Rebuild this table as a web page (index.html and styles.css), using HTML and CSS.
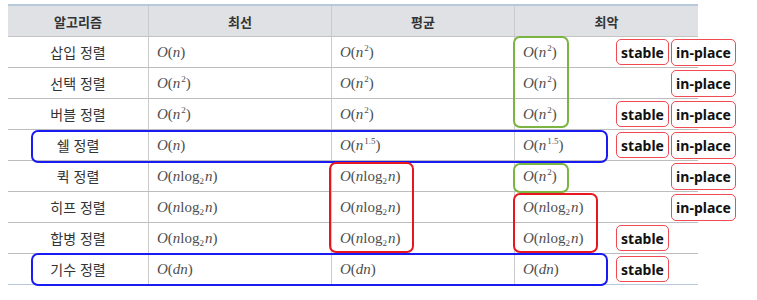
FILE: index.html
```html
<!DOCTYPE html>
<html lang="ko">
<head>
<meta charset="utf-8">
<link rel="stylesheet" href="styles.css">
</head>
<body>
<div class="page">
  <div class="table">
    <div class="row head">
      <div class="cell name">알고리즘</div>
      <div class="cell hc">최선</div>
      <div class="cell hc">평균</div>
      <div class="cell hc">최악</div>
    </div>
    <div class="row">
      <div class="cell name">삽입 정렬</div>
      <div class="cell m"><span class="math"><i>O</i>(<i>n</i>)</span></div>
      <div class="cell m"><span class="math"><i>O</i>(<i>n</i><sup>2</sup>)</span></div>
      <div class="cell m"><span class="math"><i>O</i>(<i>n</i><sup>2</sup>)</span></div>
      <div class="tags"><span class="tag stable">stable</span><span class="tag inplace">in-place</span></div>
    </div>
    <div class="row">
      <div class="cell name">선택 정렬</div>
      <div class="cell m"><span class="math"><i>O</i>(<i>n</i><sup>2</sup>)</span></div>
      <div class="cell m"><span class="math"><i>O</i>(<i>n</i><sup>2</sup>)</span></div>
      <div class="cell m"><span class="math"><i>O</i>(<i>n</i><sup>2</sup>)</span></div>
      <div class="tags"><span class="tag inplace">in-place</span></div>
    </div>
    <div class="row">
      <div class="cell name">버블 정렬</div>
      <div class="cell m"><span class="math"><i>O</i>(<i>n</i><sup>2</sup>)</span></div>
      <div class="cell m"><span class="math"><i>O</i>(<i>n</i><sup>2</sup>)</span></div>
      <div class="cell m"><span class="math"><i>O</i>(<i>n</i><sup>2</sup>)</span></div>
      <div class="tags"><span class="tag stable">stable</span><span class="tag inplace">in-place</span></div>
    </div>
    <div class="row">
      <div class="cell name">쉘 정렬</div>
      <div class="cell m"><span class="math"><i>O</i>(<i>n</i>)</span></div>
      <div class="cell m"><span class="math"><i>O</i>(<i>n</i><sup>1.5</sup>)</span></div>
      <div class="cell m"><span class="math"><i>O</i>(<i>n</i><sup>1.5</sup>)</span></div>
      <div class="tags"><span class="tag stable">stable</span><span class="tag inplace">in-place</span></div>
    </div>
    <div class="row">
      <div class="cell name">퀵 정렬</div>
      <div class="cell m"><span class="math"><i>O</i>(<i>n</i>log<sub>2</sub><i>n</i>)</span></div>
      <div class="cell m"><span class="math"><i>O</i>(<i>n</i>log<sub>2</sub><i>n</i>)</span></div>
      <div class="cell m"><span class="math"><i>O</i>(<i>n</i><sup>2</sup>)</span></div>
      <div class="tags"><span class="tag inplace">in-place</span></div>
    </div>
    <div class="row">
      <div class="cell name">히프 정렬</div>
      <div class="cell m"><span class="math"><i>O</i>(<i>n</i>log<sub>2</sub><i>n</i>)</span></div>
      <div class="cell m"><span class="math"><i>O</i>(<i>n</i>log<sub>2</sub><i>n</i>)</span></div>
      <div class="cell m"><span class="math"><i>O</i>(<i>n</i>log<sub>2</sub><i>n</i>)</span></div>
      <div class="tags"><span class="tag inplace">in-place</span></div>
    </div>
    <div class="row">
      <div class="cell name">합병 정렬</div>
      <div class="cell m"><span class="math"><i>O</i>(<i>n</i>log<sub>2</sub><i>n</i>)</span></div>
      <div class="cell m"><span class="math"><i>O</i>(<i>n</i>log<sub>2</sub><i>n</i>)</span></div>
      <div class="cell m"><span class="math"><i>O</i>(<i>n</i>log<sub>2</sub><i>n</i>)</span></div>
      <div class="tags"><span class="tag stable">stable</span></div>
    </div>
    <div class="row last">
      <div class="cell name">기수 정렬</div>
      <div class="cell m"><span class="math"><i>O</i>(<i>dn</i>)</span></div>
      <div class="cell m"><span class="math"><i>O</i>(<i>dn</i>)</span></div>
      <div class="cell m"><span class="math"><i>O</i>(<i>dn</i>)</span></div>
      <div class="tags"><span class="tag stable">stable</span></div>
    </div>
  </div>

  <div class="hl green g1"></div>
  <div class="hl green g2"></div>
  <div class="hl blue b1"></div>
  <div class="hl blue b2"></div>
  <div class="hl red r1"></div>
  <div class="hl red r2"></div>
</div>
</body>
</html>
```
FILE: styles.css
```css
html, body {
  margin: 0;
  padding: 0;
  background: #ffffff;
}

.page {
  position: relative;
  width: 757px;
  height: 300px;
  padding: 4px 0 0 8px;
  box-sizing: border-box;
}

.table {
  width: 690px;
  border-top: 2px solid #b8c9dc;
  font-family: "Noto Sans CJK KR", "Noto Sans", sans-serif;
  color: #333333;
}

.row {
  position: relative;
  display: grid;
  grid-template-columns: 140px 183px 183px 184px;
  height: 31px;
  box-sizing: border-box;
  border-bottom: 1px solid #bdbdbd;
}

.row.head {
  background: #e0e1e4;
  height: 31px;
  border-bottom: 1px solid #c4c4c4;
}

.row.last {
  border-bottom: 1px solid #b8c9dc;
}

.cell {
  display: flex;
  align-items: center;
  box-sizing: border-box;
}

.cell + .cell {
  border-left: 1px solid #cacaca;
}

.name {
  justify-content: center;
  font-size: 14px;
}

.hc {
  justify-content: center;
  font-size: 13px;
  font-weight: bold;
}

.head .name {
  font-size: 13px;
  font-weight: bold;
}

.m {
  padding-left: 8px;
  font-family: "Liberation Serif", "Times New Roman", serif;
  font-size: 15px;
  color: #4d4d4d;
}

.math {
  white-space: nowrap;
}

.math i {
  font-style: italic;
}

.math sup {
  font-size: 9px;
  vertical-align: 6px;
  line-height: 0;
  margin-left: 1px;
}

.math sub {
  font-size: 9px;
  vertical-align: -3px;
  line-height: 0;
  margin-right: 1px;
}

.tags {
  position: absolute;
  left: 608px;
  top: 0;
  height: 100%;
  display: grid;
  grid-template-columns: 55px 66px;
  align-items: center;
  z-index: 2;
}

.tag {
  box-sizing: border-box;
  display: flex;
  align-items: center;
  justify-content: center;
  border: 1px solid #f04a52;
  border-radius: 5px;
  background: #ffffff;
  font-family: "Noto Sans", "Open Sans", sans-serif;
  font-weight: bold;
  font-size: 14px;
  color: #111111;
}

.tag.stable {
  grid-column: 1;
  width: 53px;
  height: 26px;
}

.tag.inplace {
  grid-column: 2;
  width: 65px;
  height: 27px;
}

.hl {
  position: absolute;
  box-sizing: border-box;
  border-radius: 7px;
  z-index: 1;
}

.green {
  border: 2px solid #7ab443;
}

.blue {
  border: 2.5px solid #1a1af5;
}

.red {
  border: 2.5px solid #e8161e;
}

.g1 { left: 513px; top: 36px; width: 56px; height: 92px; }
.g2 { left: 513px; top: 163px; width: 56px; height: 30px; }
.b1 { left: 31px; top: 130px; width: 577px; height: 33px; }
.b2 { left: 31px; top: 253px; width: 577px; height: 33px; }
.r1 { left: 329px; top: 162px; width: 85px; height: 91px; }
.r2 { left: 513px; top: 193px; width: 85px; height: 60px; }
```
